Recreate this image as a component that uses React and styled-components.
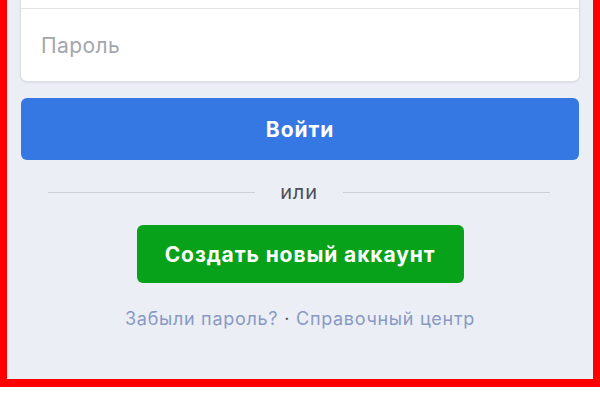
import React from 'react';
import styled, { createGlobalStyle } from 'styled-components';

const GlobalStyle = createGlobalStyle`
  html, body {
    margin: 0;
    padding: 0;
    background: #ffffff;
  }
  body {
    font-family: Inter, "Noto Sans", "DejaVu Sans", sans-serif;
  }
`;

const Frame = styled.div`
  box-sizing: border-box;
  width: 600px;
  height: 387px;
  border: 7px solid #fe0000;
  border-top: none;
  border-bottom-width: 8px;
  background: #eceef5;
  overflow: hidden;
`;

const Column = styled.div`
  display: flex;
  flex-direction: column;
  align-items: center;
  padding: 0 14px;
  margin-top: -50px;
`;

const InputGroup = styled.div`
  width: 100%;
  background: #ffffff;
  border-radius: 6px;
  box-shadow: 0 0 0 1px #dcdfe5, 0 1px 3px rgba(0, 0, 0, 0.12);
  display: flex;
  flex-direction: column;
`;

const Field = styled.input`
  box-sizing: border-box;
  height: ${p => p.$height}px;
  border: none;
  border-top: ${p => (p.$first ? 'none' : '1px solid #e1e3e8')};
  background: transparent;
  padding: 0 20px;
  font-family: inherit;
  font-size: 21px;
  letter-spacing: 0.4px;
  color: #1c1e21;
  outline: none;

  &::placeholder {
    color: #a4a6ab;
  }
`;

const Button = styled.button`
  box-sizing: border-box;
  height: ${p => p.$height}px;
  border: none;
  border-radius: 6px;
  background: ${p => p.$bg};
  color: #ffffff;
  font-family: inherit;
  font-weight: 700;
  font-size: 21px;
  letter-spacing: 0.9px;
`;

const LoginButton = styled(Button)`
  width: 100%;
  margin-top: 17px;
`;

const SignupButton = styled(Button)`
  width: 327px;
  margin-top: 1px;
  padding: 0;
`;

const Divider = styled.div`
  align-self: stretch;
  display: flex;
  align-items: center;
  gap: 25px;
  padding: 0 29px 0 27px;
  height: 64px;
  color: #4b4f56;
  font-size: 20px;
  letter-spacing: 0.8px;

  &::before,
  &::after {
    content: '';
    flex: 1;
    height: 1px;
    background: #cdd0d6;
  }
`;

const Links = styled.div`
  margin-top: 25px;
  display: flex;
  align-items: center;
  gap: 6px;
  font-size: 18px;
  letter-spacing: 0.7px;
  color: #889ac3;
`;

const Link = styled.a`
  color: inherit;
  text-decoration: none;
`;

const Dot = styled.span`
  color: #4b4f56;
`;

export default function App() {
  return (
    <>
      <GlobalStyle />
      <Frame>
        <Column>
          <InputGroup>
            <Field $first $height={58} placeholder="Телефон или эл. адрес" />
            <Field $height={73} type="password" placeholder="Пароль" />
          </InputGroup>
          <LoginButton $height={62} $bg="#3577e3">Войти</LoginButton>
          <Divider>или</Divider>
          <SignupButton $height={58} $bg="#07a21a">Создать новый аккаунт</SignupButton>
          <Links>
            <Link href="#">Забыли пароль?</Link>
            <Dot>·</Dot>
            <Link href="#">Справочный центр</Link>
          </Links>
        </Column>
      </Frame>
    </>
  );
}
